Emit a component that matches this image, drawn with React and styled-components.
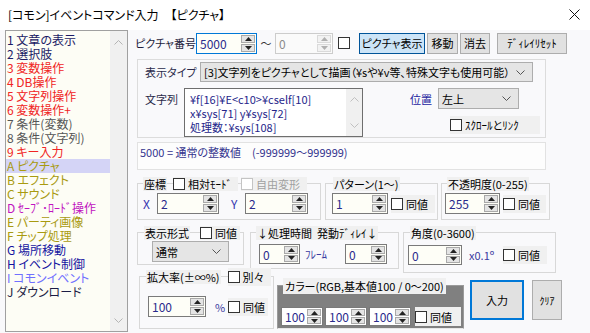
import React from "react";
import styled, { createGlobalStyle } from "styled-components";

const GlobalStyle = createGlobalStyle`
  html, body {
    margin: 0;
    padding: 0;
    background: #f9f9fb;
  }
  * {
    box-sizing: border-box;
  }
`;

const commands = [
  { text: "1 文章の表示", color: "#1c1c66" },
  { text: "2 選択肢", color: "#1c1c66" },
  { text: "3 変数操作", color: "#f02424" },
  { text: "4 DB操作", color: "#f02424" },
  { text: "5 文字列操作", color: "#f02424" },
  { text: "6 変数操作+", color: "#f02424" },
  { text: "7 条件(変数)", color: "#555555" },
  { text: "8 条件(文字列)", color: "#555555" },
  { text: "9 キー入力", color: "#f02424" },
  { text: "A ピクチャ", color: "#a89a10", selected: true },
  { text: "B エフェクト", color: "#a89a10" },
  { text: "C サウンド", color: "#a89a10" },
  { text: "D ｾｰﾌﾞ･ﾛｰﾄﾞ操作", color: "#c014c0" },
  { text: "E パーティ画像", color: "#a89a10" },
  { text: "F チップ処理", color: "#a89a10" },
  { text: "G 場所移動", color: "#1414a0" },
  { text: "H イベント制御", color: "#1414a0" },
  { text: "I コモンイベント", color: "#7070ff" },
  { text: "J ダウンロード", color: "#1c1c44" },
];

function Tri({ up, disabled }) {
  return (
    <svg width="7" height="4" viewBox="0 0 7 4">
      <polygon
        points={up ? "0,4 7,4 3.5,0" : "0,0 7,0 3.5,4"}
        fill={disabled ? "#b0b0b0" : "#222"}
      />
    </svg>
  );
}

function Chevron({ color = "#555", up }) {
  return (
    <svg width="9" height="5" viewBox="0 0 9 5">
      <polyline
        points={up ? "0.5,4.5 4.5,0.5 8.5,4.5" : "0.5,0.5 4.5,4.5 8.5,0.5"}
        fill="none"
        stroke={color}
        strokeWidth="1"
      />
    </svg>
  );
}

function Spin({ w, h = 21, value, disabled, focused, white }) {
  return (
    <SpinBox $w={w} $h={h} $disabled={disabled} $focused={focused} $white={white}>
      <SpinValue $disabled={disabled}>{value}</SpinValue>
      <SpinButtons>
        <SpinBtn $disabled={disabled}>
          <Tri up disabled={disabled} />
        </SpinBtn>
        <SpinBtn $disabled={disabled}>
          <Tri disabled={disabled} />
        </SpinBtn>
      </SpinButtons>
    </SpinBox>
  );
}

function Check({ label, disabled, w, h = 16 }) {
  return (
    <CheckWrap $w={w} $h={h}>
      <CheckBox $disabled={disabled} />
      {label && <CheckText $disabled={disabled}>{label}</CheckText>}
    </CheckWrap>
  );
}

function Select({ w, h = 21, value }) {
  return (
    <SelectBox $w={w} $h={h}>
      <span>{value}</span>
      <Chevron />
    </SelectBox>
  );
}

export default function App() {
  return (
    <Window>
      <GlobalStyle />
      <TitleBar>
        <span>[コモン]イベントコマンド入力　【ピクチャ】</span>
        <svg width="11" height="11" viewBox="0 0 11 11">
          <path d="M0.5 0.5 L10.5 10.5 M10.5 0.5 L0.5 10.5" stroke="#111" strokeWidth="1" />
        </svg>
      </TitleBar>

      <Body>
        <CommandList>
          <ListItems>
            {commands.map((c) => (
              <ListItem key={c.text} $color={c.color} $selected={c.selected}>
                {c.text}
              </ListItem>
            ))}
          </ListItems>
          <ListScroll>
            <Chevron color="#b4b4b4" up />
            <Chevron color="#b4b4b4" />
          </ListScroll>
        </CommandList>

        <Panel>
          <TopRow>
            <TopLabel>ピクチャ番号</TopLabel>
            <Spin w={61} value="5000" focused />
            <Tilde>～</Tilde>
            <Spin w={58} value="0" disabled />
            <PlainCheck />
            <Btn $w={66} $ml={9} $active>ピクチャ表示</Btn>
            <Btn $w={31} $ml={2}>移動</Btn>
            <Btn $w={30} $ml={2}>消去</Btn>
            <Btn $w={70} $ml={7}>ﾃﾞｨﾚｲﾘｾｯﾄ</Btn>
          </TopRow>

          <TypeGroup>
            <TypeRow>
              <FieldLabel $w={55}>表示タイプ</FieldLabel>
              <Select w={333} h={20} value="[3]文字列をピクチャとして描画（¥sや¥v等、特殊文字も使用可能）" />
            </TypeRow>
            <StringRow>
              <FieldLabel $w={39} $pt={3}>文字列</FieldLabel>
              <TextArea>
                <TextLines>
                  <div>{"¥f[16]¥E<c10>¥cself[10]"}</div>
                  <div>x¥sys[71] y¥sys[72]</div>
                  <div>処理数：¥sys[108]</div>
                </TextLines>
                <TextScroll>
                  <Chevron color="#c0c0c0" up />
                  <Chevron color="#c0c0c0" />
                </TextScroll>
              </TextArea>
              <PositionCol>
                <PositionRow>
                  <FieldLabel $w={28} $color="#2424a0">位置</FieldLabel>
                  <Select w={81} value="左上" />
                </PositionRow>
                <ScrollLink>
                  <Check label="ｽｸﾛｰﾙとﾘﾝｸ" w={90} h={18} />
                </ScrollLink>
              </PositionCol>
            </StringRow>
          </TypeGroup>

          <Message>5000 = 通常の整数値　(-999999～999999)</Message>

          <GroupRow $mt={13}>
            <Group $w={184} $h={37}>
              <GroupHead $ml={5}>
                <HeadLabel>座標</HeadLabel>
                <Check label="相対ﾓｰﾄﾞ" w={65} h={14} />
                <HeadGap $w={3} />
                <Check label="自由変形" disabled w={66} h={14} />
              </GroupHead>
              <GroupBody $mt={2} $pl={5}>
                <AxisLabel>X</AxisLabel>
                <Spin w={62} value="2" />
                <AxisLabel $ml={12}>Y</AxisLabel>
                <Spin w={63} value="2" />
              </GroupBody>
            </Group>
            <Group $w={113} $h={37} $ml={4}>
              <GroupHead $ml={7}>
                <HeadLabel>パターン(1～)</HeadLabel>
              </GroupHead>
              <GroupBody $mt={2} $pl={6}>
                <Spin w={56} value="1" />
                <CheckGap />
                <Check label="同値" w={44} h={18} />
              </GroupBody>
            </Group>
            <Group $w={109} $h={37} $ml={3}>
              <GroupHead $ml={5}>
                <HeadLabel>不透明度(0-255)</HeadLabel>
              </GroupHead>
              <GroupBody $mt={2} $pl={3}>
                <Spin w={55} value="255" />
                <CheckGap />
                <Check label="同値" w={43} h={18} />
              </GroupBody>
            </Group>
          </GroupRow>

          <GroupRow $mt={12}>
            <Group $w={107} $h={33}>
              <GroupHead $ml={6}>
                <HeadLabel>表示形式</HeadLabel>
                <HeadGap $w={4} />
                <Check label="同値" w={40} h={14} />
              </GroupHead>
              <GroupBody $mt={1} $pl={14}>
                <Select w={77} value="通常" />
              </GroupBody>
            </Group>
            <Group $w={149} $h={37} $ml={6}>
              <GroupHead $ml={5}>
                <HeadLabel>↓処理時間&nbsp;&nbsp;発動ﾃﾞｨﾚｲ↓</HeadLabel>
              </GroupHead>
              <GroupBody $mt={4} $pl={8}>
                <Spin w={41} h={20} value="0" />
                <UnitLabel $w={40} $ml={5}>ﾌﾚｰﾑ</UnitLabel>
                <Spin w={42} h={20} value="0" />
              </GroupBody>
            </Group>
            <Group $w={153} $h={41} $ml={4}>
              <GroupHead $ml={6}>
                <HeadLabel>角度(0-3600)</HeadLabel>
              </GroupHead>
              <GroupBody $mt={5} $pl={4}>
                <Spin w={54} h={20} value="0" />
                <UnitLabel $w={34} $ml={7}>x0.1º</UnitLabel>
                <Check label="同値" w={44} h={18} />
              </GroupBody>
            </Group>
          </GroupRow>

          <GroupRow $mt={3}>
            <Group $w={135} $h={53} $ml={2}>
              <GroupHead $ml={6} $mt={-9} $h={18}>
                <HeadLabel>拡大率(±∞%)</HeadLabel>
                <HeadGap $w={1} />
                <Check label="別々" w={43} h={18} />
              </GroupHead>
              <GroupBody $mt={10} $pl={8}>
                <Spin w={58} value="100" />
                <UnitLabel $w={13} $ml={9}>%</UnitLabel>
                <Check label="同値" w={40} h={18} />
              </GroupBody>
            </Group>
            <ColorPanel>
              <ColorHead>カラー(RGB,基本値100 / 0～200)</ColorHead>
              <ColorBody>
                <Spin w={42} h={19} value="100" white />
                <Spin w={42} h={19} value="100" white />
                <Spin w={42} h={19} value="100" white />
                <Check label="同値" w={46} h={19} />
              </ColorBody>
            </ColorPanel>
            <BigBtn $w={54} $ml={6} $primary>入力</BigBtn>
            <BigBtn $w={30} $ml={8} $small>ｸﾘｱ</BigBtn>
          </GroupRow>
        </Panel>
      </Body>
    </Window>
  );
}

const Window = styled.div`
  width: 590px;
  height: 333px;
  overflow: hidden;
  background: #f9f9fb;
  font-family: "Noto Sans CJK JP", "Noto Sans", sans-serif;
  font-size: 11px;
  font-feature-settings: "palt";
  color: #000;
`;

const TitleBar = styled.div`
  height: 30px;
  background: #ffffff;
  display: flex;
  align-items: center;
  justify-content: space-between;
  padding: 0 10px 2px 8px;
  font-size: 12px;
`;

const Body = styled.div`
  display: flex;
  gap: 7px;
  padding-left: 5px;
  height: 303px;
`;

const CommandList = styled.div`
  width: 123px;
  height: 302px;
  border: 1px solid #a0a0a0;
  background: #fdfdf5;
  display: flex;
  flex-shrink: 0;
`;

const ListItems = styled.div`
  flex: 1;
  padding-top: 2px;
  font-size: 12px;
`;

const ListItem = styled.div`
  height: 14px;
  line-height: 14px;
  padding-left: 1px;
  white-space: nowrap;
  color: ${({ $color }) => $color};
  background: ${({ $selected }) => ($selected ? "#d4d4f6" : "transparent")};
`;

const ListScroll = styled.div`
  width: 17px;
  background: #f0f0f0;
  display: flex;
  flex-direction: column;
  justify-content: space-between;
  align-items: center;
  padding: 9px 0 8px;
`;

const Panel = styled.div`
  display: flex;
  flex-direction: column;
  width: 455px;
`;

const TopRow = styled.div`
  display: flex;
  align-items: center;
  height: 22px;
  margin-top: 2px;
`;

const TopLabel = styled.div`
  width: 61px;
  white-space: nowrap;
  color: #1c1c3c;
`;

const Tilde = styled.div`
  width: 18px;
  text-align: center;
  color: #333;
`;

const PlainCheck = styled.div`
  width: 12px;
  height: 12px;
  margin-left: 5px;
  border: 1px solid #333;
  background: #fff;
`;

const Btn = styled.div`
  width: ${({ $w }) => $w}px;
  height: 21px;
  margin-left: ${({ $ml }) => $ml}px;
  display: flex;
  align-items: center;
  justify-content: center;
  white-space: nowrap;
  background: ${({ $active }) => ($active ? "#cce4f7" : "#e1e1e1")};
  border: 1px solid ${({ $active }) => ($active ? "#005499" : "#adadad")};
`;

const SpinBox = styled.div`
  width: ${({ $w }) => $w}px;
  height: ${({ $h }) => $h}px;
  display: flex;
  flex-shrink: 0;
  border: 1px solid
    ${({ $focused, $disabled }) =>
      $focused ? "#0078d7" : $disabled ? "#cccccc" : "#7a7a7a"};
  background: ${({ $disabled, $white }) =>
    $disabled ? "#fafafa" : $white ? "#ffffff" : "#fefef7"};
`;

const SpinValue = styled.div`
  flex: 1;
  padding-left: 3px;
  display: flex;
  align-items: center;
  font-size: 12px;
  color: ${({ $disabled }) => ($disabled ? "#8a8a8a" : "#2a2a8c")};
`;

const SpinButtons = styled.div`
  width: 15px;
  display: flex;
  flex-direction: column;
  gap: 1px;
  padding: 1px 1px 1px 0;
`;

const SpinBtn = styled.div`
  flex: 1;
  display: flex;
  align-items: center;
  justify-content: center;
  background: ${({ $disabled }) => ($disabled ? "#f2f2f2" : "#e4e4e4")};
  border: 1px solid ${({ $disabled }) => ($disabled ? "#dadada" : "#a9a9a9")};
`;

const CheckWrap = styled.div`
  display: flex;
  align-items: center;
  gap: 3px;
  width: ${({ $w }) => $w}px;
  height: ${({ $h }) => $h}px;
  background: #f0f0f0;
  white-space: nowrap;
  flex-shrink: 0;
`;

const CheckBox = styled.div`
  width: 12px;
  height: 12px;
  flex-shrink: 0;
  border: 1px solid ${({ $disabled }) => ($disabled ? "#c4c4c4" : "#333333")};
  background: #ffffff;
`;

const CheckText = styled.span`
  color: ${({ $disabled }) => ($disabled ? "#a0a0a0" : "#000")};
`;

const SelectBox = styled.div`
  width: ${({ $w }) => $w}px;
  height: ${({ $h }) => $h}px;
  flex-shrink: 0;
  display: flex;
  align-items: center;
  justify-content: space-between;
  padding: 0 7px 0 3px;
  background: #e5e5e5;
  border: 1px solid #adadad;
  white-space: nowrap;
  overflow: hidden;
`;

const TypeGroup = styled.div`
  width: 409px;
  height: 79px;
  margin: 5px 0 0 2px;
  border: 1px solid #dcdcdc;
  padding: 2px 0 0 7px;
`;

const TypeRow = styled.div`
  display: flex;
  align-items: center;
  height: 20px;
`;

const FieldLabel = styled.div`
  width: ${({ $w }) => $w}px;
  padding-top: ${({ $pt }) => $pt || 0}px;
  color: ${({ $color }) => $color || "#2a2a4a"};
  white-space: nowrap;
  flex-shrink: 0;
`;

const StringRow = styled.div`
  display: flex;
  margin-top: 6px;
`;

const TextArea = styled.div`
  width: 179px;
  height: 49px;
  border: 1px solid #6e6e6e;
  background: #ffffff;
  display: flex;
  flex-shrink: 0;
`;

const TextLines = styled.div`
  flex: 1;
  padding: 3px 0 0 5px;
  line-height: 14px;
  color: #25258a;
  white-space: nowrap;
  overflow: hidden;
`;

const TextScroll = styled.div`
  width: 16px;
  background: #f0f0f0;
  display: flex;
  flex-direction: column;
  justify-content: space-between;
  align-items: center;
  padding: 8px 0 8px;
`;

const PositionCol = styled.div`
  margin-left: 47px;
  display: flex;
  flex-direction: column;
`;

const PositionRow = styled.div`
  display: flex;
  align-items: center;
`;

const ScrollLink = styled.div`
  margin: 7px 0 0 40px;
`;

const Message = styled.div`
  width: 409px;
  height: 28px;
  margin: 4px 0 0 2px;
  border: 1px solid #e2e2e2;
  background: #fdfdfd;
  padding: 2px 2px;
  line-height: 14px;
  color: #34348e;
  white-space: nowrap;
`;

const GroupRow = styled.div`
  display: flex;
  align-items: flex-start;
  margin: ${({ $mt }) => $mt}px 0 0 2px;
`;

const Group = styled.div`
  width: ${({ $w }) => $w}px;
  height: ${({ $h }) => $h}px;
  margin-left: ${({ $ml }) => $ml || 0}px;
  border: 1px solid #d8d8d8;
  flex-shrink: 0;
`;

const GroupHead = styled.div`
  display: flex;
  align-items: center;
  height: ${({ $h }) => $h || 14}px;
  margin: ${({ $mt }) => $mt || -7}px 0 0 ${({ $ml }) => $ml}px;
`;

const HeadLabel = styled.div`
  background: #f0f0f0;
  padding: 0 1px;
  line-height: 14px;
  white-space: nowrap;
  margin-right: 6px;
`;

const HeadGap = styled.div`
  width: ${({ $w }) => $w}px;
`;

const GroupBody = styled.div`
  display: flex;
  align-items: center;
  margin-top: ${({ $mt }) => $mt}px;
  padding-left: ${({ $pl }) => $pl}px;
`;

const AxisLabel = styled.div`
  width: 14px;
  margin-left: ${({ $ml }) => $ml || 0}px;
  font-size: 12px;
  color: #3434b0;
`;

const CheckGap = styled.div`
  width: 3px;
`;

const UnitLabel = styled.div`
  width: ${({ $w }) => $w}px;
  margin-left: ${({ $ml }) => $ml}px;
  color: #3a3aa0;
  white-space: nowrap;
`;

const ColorPanel = styled.div`
  width: 187px;
  height: 44px;
  margin: 9px 0 0 3px;
  background: #808080;
  border: 1px solid #9a9a9a;
  border-bottom-color: #e8e8e8;
  flex-shrink: 0;
`;

const ColorHead = styled.div`
  display: inline-block;
  height: 16px;
  line-height: 16px;
  margin: -8px 0 0 5px;
  padding: 0 2px;
  background: #f0f0f0;
  white-space: nowrap;
  vertical-align: top;
`;

const ColorBody = styled.div`
  display: flex;
  align-items: center;
  gap: 2px;
  margin-top: 5px;
  padding-left: 3px;

  & > :last-child {
    margin-left: 2px;
  }
`;

const BigBtn = styled.div`
  width: ${({ $w }) => $w}px;
  height: 40px;
  margin: 4px 0 0 ${({ $ml }) => $ml}px;
  display: flex;
  align-items: center;
  justify-content: center;
  flex-shrink: 0;
  background: #e1e1e1;
  border: ${({ $primary }) => ($primary ? "2px solid #0078d7" : "1px solid #adadad")};
  font-size: ${({ $small }) => ($small ? "10px" : "11px")};
`;
